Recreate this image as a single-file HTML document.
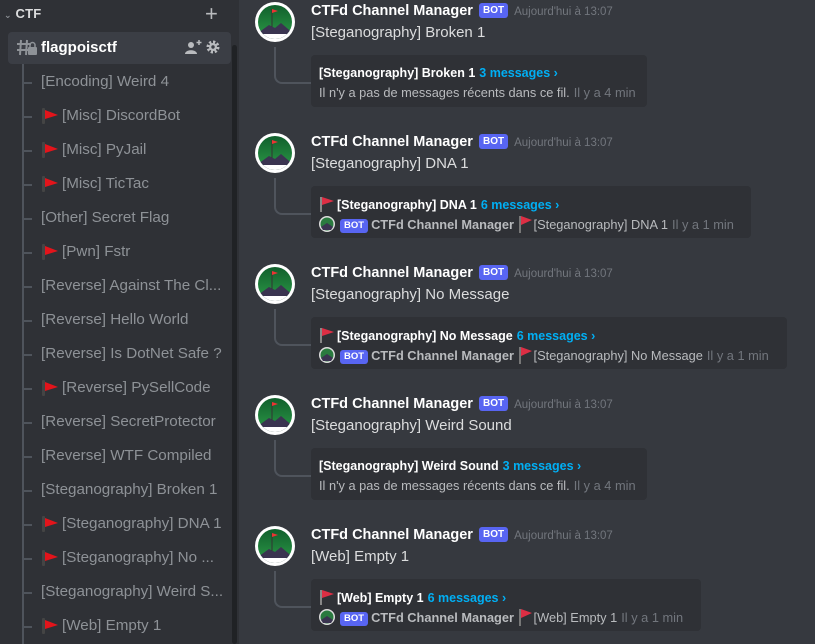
<!DOCTYPE html>
<html><head><meta charset="utf-8">
<style>
*{margin:0;padding:0;box-sizing:border-box}
html,body{width:815px;height:644px;overflow:hidden}
body{background:#36393f;font-family:"Liberation Sans","DejaVu Sans",sans-serif;position:relative}
#side{position:absolute;left:0;top:0;width:239px;height:644px;background:#2f3136;overflow:hidden}
.thumb{position:absolute;left:232px;top:45px;width:5px;height:599px;background:#202225;border-radius:3px}
.cat{position:absolute;left:4px;top:6px;color:#dcddde;font-size:13px;font-weight:bold;letter-spacing:.2px}
.plus{position:absolute;left:205px;top:1px;color:#b9bbbe;font-size:22px;font-weight:300}
.sel{position:absolute;left:8px;top:32px;width:223px;height:32px;background:#3b3e45;border-radius:4px}
.sel .t{position:absolute;left:33px;top:7px;color:#fff;font-size:15px;font-weight:bold}
.spine{position:absolute;left:22px;top:64px;width:2px;height:580px;background:#4f545c}
.it{position:absolute;left:41px;color:#8e9297;font-size:15.2px;white-space:nowrap;height:20px;line-height:20px}
.it.f{padding-left:21px}
.it .fl{position:absolute;left:0;top:0}
.br{position:absolute;left:22px;width:10px;height:2px;background:#4f545c}
.m{position:absolute;left:0;width:815px;height:131px}
.av{position:absolute;left:255px;top:2px;width:40px;height:40px}
.nm{position:absolute;left:311px;top:3px;color:#fff;font-size:14.5px;font-weight:bold;white-space:nowrap}
.bot{display:inline-block;background:#5865f2;color:#fff;font-size:10px;font-weight:bold;padding:2px 4px;border-radius:3px;vertical-align:2px;margin-left:2px}
.ts{color:#72767d;font-size:11.5px;font-weight:normal;margin-left:6px}
.ct{position:absolute;left:311px;top:24px;color:#dcddde;font-size:15px}
.ln{position:absolute;left:274px;top:47px;width:37px;height:37px;border-left:2px solid #4f545c;border-bottom:2px solid #4f545c;border-bottom-left-radius:8px}
.bx{position:absolute;left:311px;top:55px;height:52px;background:#2f3136;border-radius:4px}
.l1{position:absolute;left:8px;top:10px;color:#fff;font-size:12.5px;font-weight:bold;white-space:nowrap;height:16px;line-height:16px}
.l1 .c{color:#00aff4;margin-left:4px}
.l2{position:absolute;left:8px;top:29px;color:#b9bbbe;font-size:12.8px;white-space:nowrap;height:18px;line-height:18px}
.l2 .a{color:#72767d;margin-left:4px}
.l2 .b{color:#b9bbbe;font-weight:bold}
.sb{display:inline-block;background:#5865f2;color:#fff;font-size:9.5px;font-weight:bold;padding:1px 4px;border-radius:3px;line-height:12px;margin:0 3px 0 5px;vertical-align:1px}
svg{display:inline-block}
</style></head><body>
<div id="side">
<div class="cat"><span style="font-size:9px;color:#8e9297">&#8964;</span> CTF</div>
<div class="plus">+</div>
<div class="sel">
<svg style="position:absolute;left:9px;top:7px" width="20" height="18" viewBox="0 0 20 18"><path d="M4 1 L3 16 M10 1 L9 16 M0 5 H14 M0 11 H13" stroke="#8e9297" stroke-width="2" fill="none"/><rect x="11" y="8" width="9" height="8" rx="1" fill="#8e9297"/><path d="M13 8 V6 A2.5 2.5 0 0 1 18 6 V8" stroke="#8e9297" stroke-width="1.5" fill="none"/></svg>
<div class="t">flagpoisctf</div>
<svg style="position:absolute;left:177px;top:8px" width="17" height="14" viewBox="0 0 17 14"><circle cx="6" cy="5" r="3" fill="#b9bbbe"/><path d="M0 14 C0 9 12 9 12 14Z" fill="#b9bbbe"/><path d="M14 0 V5 M11.5 2.5 H16.5" stroke="#b9bbbe" stroke-width="1.5"/></svg>
<svg style="position:absolute;left:198px;top:8px" width="14" height="14" viewBox="0 0 14 14"><circle cx="7" cy="7" r="5" fill="none" stroke="#b9bbbe" stroke-width="3" stroke-dasharray="2.2 1.7"/><circle cx="7" cy="7" r="4" fill="#b9bbbe"/><circle cx="7" cy="7" r="1.7" fill="#3b3e45"/></svg>
</div>
<div class="spine"></div>
<div id="items"></div>
<div class="thumb"></div>
</div>
<div id="main"></div>
<script>
var F='<svg class="fl" width="20" height="20" viewBox="0 0 20 20"><rect x="1" y="2" width="3" height="16" rx="1" fill="#444"/><path d="M4 4 L17 9 L4 13Z" fill="#e3141b"/></svg>';
var items=[["[Encoding] Weird 4",0],["[Misc] DiscordBot",1],["[Misc] PyJail",1],["[Misc] TicTac",1],["[Other] Secret Flag",0],["[Pwn] Fstr",1],["[Reverse] Against The Cl...",0],["[Reverse] Hello World",0],["[Reverse] Is DotNet Safe ?",0],["[Reverse] PySellCode",1],["[Reverse] SecretProtector",0],["[Reverse] WTF Compiled",0],["[Steganography] Broken 1",0],["[Steganography] DNA 1",1],["[Steganography] No ...",1],["[Steganography] Weird S...",0],["[Web] Empty 1",1]];
var h='';
items.forEach(function(it,i){var y=82+34*i;h+='<div class="br" style="top:'+(y)+'px"></div><div class="it'+(it[1]?' f':'')+'" style="top:'+(y-10)+'px">'+(it[1]?F:'')+it[0]+'</div>';});
document.getElementById('items').innerHTML=h;
function AV(i){return '<svg class="av" viewBox="0 0 40 40"><defs><linearGradient id="g'+i+'" x1="0" y1="0" x2="0" y2="1"><stop offset="0" stop-color="#0e5a2a"/><stop offset="1" stop-color="#2fa04a"/></linearGradient><clipPath id="c'+i+'"><circle cx="20" cy="20" r="17"/></clipPath></defs><circle cx="20" cy="20" r="20" fill="#fff"/><g clip-path="url(#c'+i+')"><rect width="40" height="40" fill="url(#g'+i+')"/><path d="M0 33 L14 23 L20 26 L26 21 L40 33 V40 H0Z" fill="#3a3450"/><rect x="0" y="32" width="40" height="8" fill="#fff"/></g><path d="M17 7 V25" stroke="#333" stroke-width="1"/><path d="M17 7 L23 9 L17 11Z" fill="#e33"/></svg>';}
var SA='<svg width="16" height="16" viewBox="0 0 16 16" style="vertical-align:-3px"><circle cx="8" cy="8" r="8" fill="#ddd"/><circle cx="8" cy="8" r="6.5" fill="#2a7a3f"/><path d="M2 11 L8 7 L14 11 L12 14 H4Z" fill="#3a3450"/></svg>';
var SF='<svg width="16" height="18" viewBox="0 0 16 18" style="vertical-align:-4px"><rect x="1" y="1" width="2" height="17" fill="#777"/><path d="M3 1 L14 5 L3 10Z" fill="#dd2e44"/></svg>';
var SFB='<svg width="17" height="16" viewBox="0 0 17 16" style="vertical-align:-3px;margin-right:1px"><rect x="1" y="1" width="2" height="15" fill="#888"/><path d="M3 1 L15 5 L3 9Z" fill="#dd2e44"/></svg>';
var msgs=[["[Steganography] Broken 1",336,0,3,"4"],["[Steganography] DNA 1",440,1,6,"1"],["[Steganography] No Message",476,1,6,"1"],["[Steganography] Weird Sound",336,0,3,"4"],["[Web] Empty 1",390,1,6,"1"]];
var m='';
msgs.forEach(function(x,i){
var l2=x[2]? SA+'<span class="sb">BOT</span><span class="b">CTFd Channel Manager</span> '+SF+x[0]+'<span class="a">Il y a 1 min</span>' : 'Il n\'y a pas de messages récents dans ce fil.<span class="a">Il y a 4 min</span>';
m+='<div class="m" style="top:'+(131*i)+'px">'+AV(i)+'<div class="nm">CTFd Channel Manager <span class="bot">BOT</span><span class="ts">Aujourd\'hui à 13:07</span></div><div class="ct">'+x[0]+'</div><div class="ln"></div><div class="bx" style="width:'+x[1]+'px"><div class="l1">'+(x[2]?SFB:'')+x[0]+'<span class="c">'+x[3]+' messages ›</span></div><div class="l2">'+l2+'</div></div></div>';
});
document.getElementById('main').innerHTML=m;
</script>
</body></html>
